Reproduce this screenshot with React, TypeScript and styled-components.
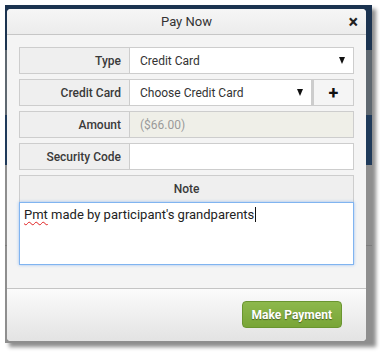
import styled, { createGlobalStyle } from 'styled-components';

const GlobalStyle = createGlobalStyle`
  html, body {
    margin: 0;
    padding: 0;
    background: #ffffff;
    font-family: Roboto, "Liberation Sans", Arial, sans-serif;
  }
  * { box-sizing: border-box; }
`;

const Page = styled.div`
  width: 380px;
  height: 354px;
  padding: 5px 0 0 5px;
`;

const Frame = styled.div`
  width: 367px;
  height: 338px;
  padding: 4px 6px 2px 2px;
  background: linear-gradient(
    to bottom,
    #1b3350 0 45px,
    #5f6870 45px 110px,
    #1f3a5a 110px 160px,
    #8e8e8e 160px 240px,
    #7c7c7c 240px 241px,
    #8e8e8e 241px
  );
  box-shadow: 4px 4px 4px rgba(0, 0, 0, 0.45);
`;

const Modal = styled.div`
  width: 359px;
  height: 332px;
  display: flex;
  flex-direction: column;
  background: #f4f4f4;
  border-radius: 4px;
  overflow: hidden;
`;

const Header = styled.div`
  height: 26px;
  flex: none;
  position: relative;
  display: flex;
  align-items: center;
  justify-content: center;
  background: linear-gradient(to bottom, #f6f6f6, #ececec);
  border-bottom: 1px solid #c6c6c6;
  color: #333;
  font-size: 13px;
`;

const Close = styled.span`
  position: absolute;
  right: 8px;
  top: 2px;
  font-size: 18px;
  font-weight: 700;
  color: #222;
`;

const Body = styled.div`
  flex: 1;
  padding: 12px 12px 0 12px;
  display: flex;
  flex-direction: column;
  gap: 5px;
`;

const Row = styled.div`
  display: flex;
  height: 27px;
`;

const Label = styled.div`
  width: 111px;
  flex: none;
  display: flex;
  align-items: center;
  justify-content: flex-end;
  padding-right: 8px;
  background: #efefef;
  border: 1px solid #cdcdcd;
  font-size: 12px;
  font-weight: 500;
  color: #3a3a3a;
`;

const Field = styled.div<{ $disabled?: boolean }>`
  flex: 1;
  display: flex;
  align-items: center;
  padding: 0 8px 0 10px;
  background: ${(p) => (p.$disabled ? '#efefe8' : '#ffffff')};
  border: 1px solid #cdcdcd;
  border-left: none;
  font-size: 12px;
  color: ${(p) => (p.$disabled ? '#9a9a9a' : '#333')};
`;

const FieldText = styled.span`
  flex: 1;
`;

const Caret = styled.span`
  width: 0;
  height: 0;
  border-left: 3.5px solid transparent;
  border-right: 3.5px solid transparent;
  border-top: 7px solid #111;
`;

const AddButton = styled.div`
  width: 42px;
  flex: none;
  display: flex;
  align-items: center;
  justify-content: center;
  background: #f5f5f5;
  border: 1px solid #cdcdcd;
  border-left: 2px solid #cdcdcd;
  font-size: 18px;
  font-weight: 700;
  color: #111;
`;

const NoteHeader = styled.div`
  height: 27px;
  display: flex;
  align-items: center;
  justify-content: center;
  background: #efefef;
  border: 1px solid #cdcdcd;
  border-bottom: none;
  font-size: 12px;
  font-weight: 500;
  color: #3a3a3a;
`;

const NoteBlock = styled.div`
  display: flex;
  flex-direction: column;
`;

const TextArea = styled.div`
  height: 63px;
  background: #ffffff;
  border: 1px solid #80b4f0;
  box-shadow: 0 0 3px rgba(100, 160, 240, 0.6);
  padding: 4px 4px;
  font-size: 13px;
  color: #222;
`;

const Misspelled = styled.span`
  text-decoration: underline wavy #e02020;
  text-decoration-thickness: 1px;
  text-underline-offset: 2px;
`;

const Cursor = styled.span`
  display: inline-block;
  width: 1px;
  height: 15px;
  background: #111;
  vertical-align: -3px;
  margin-left: 1px;
`;

const Footer = styled.div`
  height: 53px;
  flex: none;
  display: flex;
  align-items: center;
  justify-content: flex-end;
  padding: 0 24px 1px 0;
  border-top: 1px solid #c4c4c4;
  background: linear-gradient(to bottom, #fbfbfb, #e3e3e3);
`;

const PayButton = styled.button`
  height: 27px;
  padding: 0 9px;
  border: 1px solid #6a9530;
  border-radius: 4px;
  background: linear-gradient(to bottom, #8db84c, #78a537);
  color: #fff;
  font-family: Roboto, "Liberation Sans", Arial, sans-serif;
  font-size: 12px;
  font-weight: 700;
  text-shadow: 0 1px 1px rgba(0, 0, 0, 0.45);
  cursor: pointer;
`;

export default function App() {
  return (
    <>
      <GlobalStyle />
      <Page>
        <Frame>
          <Modal>
            <Header>
              Pay Now
              <Close>×</Close>
            </Header>
            <Body>
              <Row>
                <Label>Type</Label>
                <Field>
                  <FieldText>Credit Card</FieldText>
                  <Caret />
                </Field>
              </Row>
              <Row>
                <Label>Credit Card</Label>
                <Field>
                  <FieldText>Choose Credit Card</FieldText>
                  <Caret />
                </Field>
                <AddButton>+</AddButton>
              </Row>
              <Row>
                <Label>Amount</Label>
                <Field $disabled>
                  <FieldText>($66.00)</FieldText>
                </Field>
              </Row>
              <Row>
                <Label>Security Code</Label>
                <Field />
              </Row>
              <NoteBlock>
                <NoteHeader>Note</NoteHeader>
                <TextArea>
                  <Misspelled>Pmt</Misspelled> made by participant's grandparents
                  <Cursor />
                </TextArea>
              </NoteBlock>
            </Body>
            <Footer>
              <PayButton>Make Payment</PayButton>
            </Footer>
          </Modal>
        </Frame>
      </Page>
    </>
  );
}
